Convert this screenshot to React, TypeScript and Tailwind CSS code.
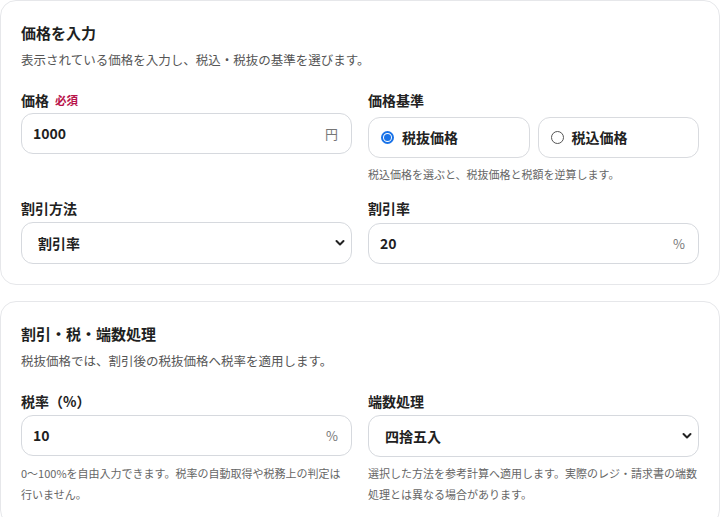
import React from "react";

const font = { fontFamily: '"Noto Sans CJK JP", "Noto Sans", sans-serif' };

function Chevron() {
  return (
    <svg
      className="pointer-events-none absolute right-[7px] top-1/2 -translate-y-1/2"
      width="10"
      height="7"
      viewBox="0 0 10 7"
      fill="none"
    >
      <path d="M1.5 1.5L5 5L8.5 1.5" stroke="#222" strokeWidth="2" strokeLinecap="round" strokeLinejoin="round" />
    </svg>
  );
}

function TextInput({ value, unit }: { value: string; unit: string }) {
  return (
    <div className="flex h-[41px] items-center rounded-xl border border-[#d6d9de] bg-white pl-[11px] pr-[13px]">
      <input
        readOnly
        value={value}
        className="min-w-0 flex-1 bg-transparent text-[14px] font-semibold text-[#1f1f1f] outline-none"
        style={font}
      />
      <span className="text-[13px] text-[#777]">{unit}</span>
    </div>
  );
}

function Select({ value }: { value: string }) {
  return (
    <div className="relative">
      <select
        defaultValue={value}
        className="h-[42px] w-full appearance-none rounded-xl border border-[#d6d9de] bg-white pl-4 text-[14px] font-semibold text-[#1f1f1f] outline-none"
        style={font}
      >
        <option>{value}</option>
      </select>
      <Chevron />
    </div>
  );
}

function Radio({ label, checked }: { label: string; checked?: boolean }) {
  return (
    <label className="flex h-[41px] items-center gap-2 rounded-xl border border-[#d9dbdf] bg-white pl-3">
      {checked ? (
        <span className="flex h-[13px] w-[13px] items-center justify-center rounded-full border-2 border-[#1a73e8]">
          <span className="h-[7px] w-[7px] rounded-full bg-[#1a73e8]" />
        </span>
      ) : (
        <span className="h-[13px] w-[13px] rounded-full border border-[#555]" />
      )}
      <span className="text-[14px] font-bold text-[#222]">{label}</span>
    </label>
  );
}

function Label({ children }: { children: React.ReactNode }) {
  return <div className="flex h-5 items-center gap-[6px] text-[14px] font-bold leading-5 text-[#222]">{children}</div>;
}

export default function App() {
  return (
    <div className="min-h-screen bg-white" style={font}>
      <section className="rounded-2xl border border-[#e6e7ea] bg-white p-5">
        <h2 className="text-[15px] font-bold leading-6 text-[#1e1f22]">価格を入力</h2>
        <p className="mt-[5px] text-[12.5px] leading-5 text-[#555]">
          表示されている価格を入力し、税込・税抜の基準を選びます。
        </p>
        <div className="mt-5 grid grid-cols-2 gap-x-4 gap-y-[13px]">
          <div>
            <Label>
              価格 <span className="text-[11.5px] font-bold text-[#b8134a]">必須</span>
            </Label>
            <div className="mt-[3px]">
              <TextInput value="1000" unit="円" />
            </div>
          </div>
          <div>
            <Label>価格基準</Label>
            <div className="mt-[7px] grid grid-cols-2 gap-2">
              <Radio label="税抜価格" checked />
              <Radio label="税込価格" />
            </div>
            <p className="mt-[6px] text-[11px] leading-[21px] text-[#666]">
              税込価格を選ぶと、税抜価格と税額を逆算します。
            </p>
          </div>
          <div>
            <Label>割引方法</Label>
            <div className="mt-1">
              <Select value="割引率" />
            </div>
          </div>
          <div>
            <Label>割引率</Label>
            <div className="mt-[5px]">
              <TextInput value="20" unit="%" />
            </div>
          </div>
        </div>
      </section>

      <section className="mt-4 rounded-2xl border border-[#e6e7ea] bg-white p-5">
        <h2 className="text-[15px] font-bold leading-6 text-[#1e1f22]">割引・税・端数処理</h2>
        <p className="mt-[5px] text-[12.5px] leading-5 text-[#555]">
          税抜価格では、割引後の税抜価格へ税率を適用します。
        </p>
        <div className="mt-5 grid grid-cols-2 gap-x-4">
          <div>
            <Label>税率（%）</Label>
            <div className="mt-[4px]">
              <TextInput value="10" unit="%" />
            </div>
            <p className="mt-[7px] text-[11px] leading-[21px] text-[#666]">
              0～100%を自由入力できます。税率の自動取得や税務上の判定は
              <br />
              行いません。
            </p>
          </div>
          <div>
            <Label>端数処理</Label>
            <div className="mt-[4px]">
              <Select value="四捨五入" />
            </div>
            <p className="mt-[6px] text-[11px] leading-[21px] text-[#666]">
              選択した方法を参考計算へ適用します。実際のレジ・請求書の端数処理とは異なる場合があります。
            </p>
          </div>
        </div>
      </section>
    </div>
  );
}
